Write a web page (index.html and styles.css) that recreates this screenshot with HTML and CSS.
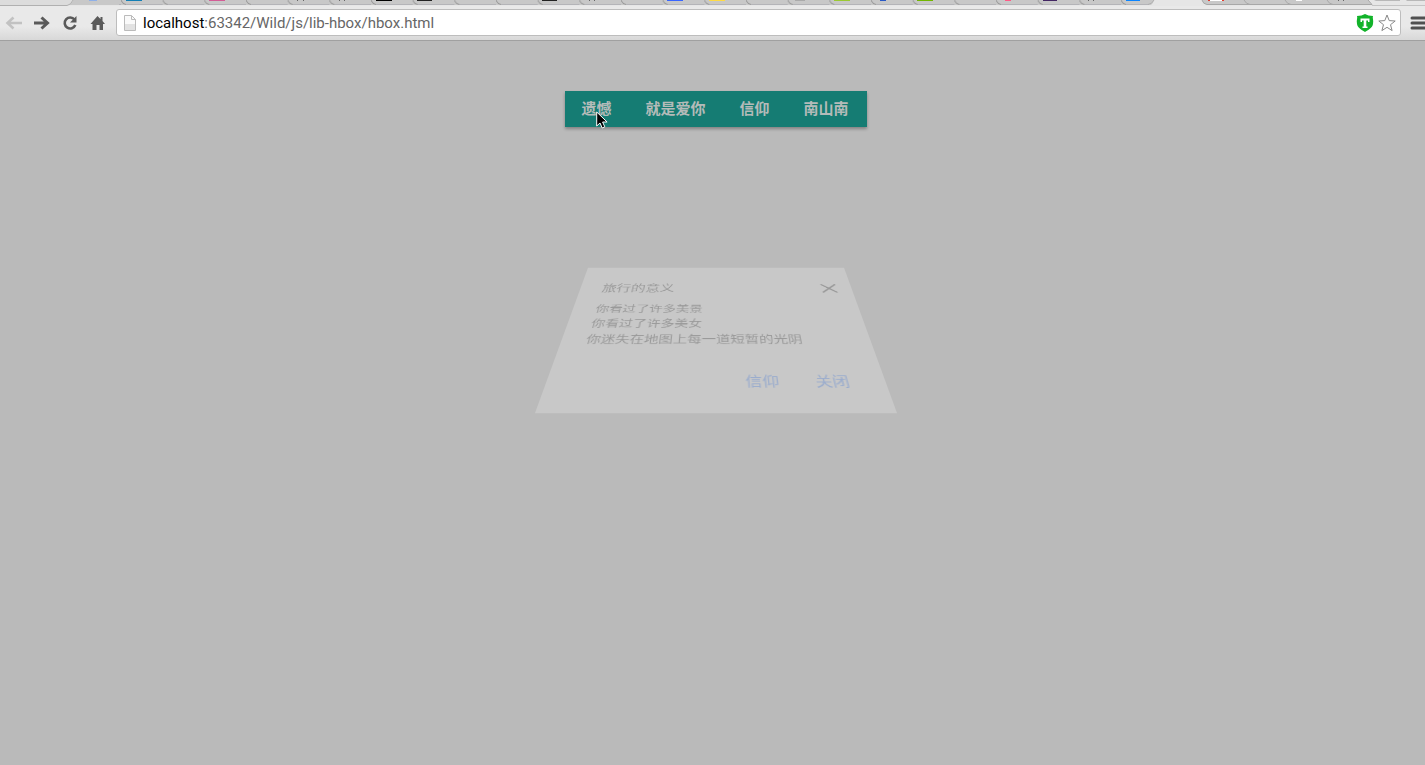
FILE: index.html
```html
<!DOCTYPE html>
<html lang="zh-CN">
<head>
<meta charset="utf-8">
<title>hbox</title>
<link rel="stylesheet" href="styles.css">
</head>
<body>
<div class="window">
  <svg class="tabs" width="1433" height="6" viewBox="0 0 1433 6" aria-hidden="true">
    <defs>
      <pattern id="tab" x="121" width="41.67" height="6" patternUnits="userSpaceOnUse">
        <path d="M0 0Q1.500 4 5 4.500" fill="none" stroke="#999"/><path d="M5 4.500H41.670" stroke="#b4b4b8"/>
      </pattern>
    </defs>
    <rect width="1433" height="6" fill="#e6e6e6"/>
    <rect width="72" height="5" fill="#dcdcdc"/>
    <path d="M73 0Q72 4 69 5H1151Q1153 4 1154 0Z" fill="#c8c8c8"/>
    <rect x="119" width="1030" height="6" fill="url(#tab)"/>
    <path d="M0 5.500H67Q71 5 73 0M1148 4.500Q1152 4 1154 0" fill="none" stroke="#b0b0b0"/>
    <path d="M1202 0Q1203 4 1207 5H1372L1368 0Z" fill="#c8c8c8"/>
    <path d="M1202 0Q1203 4 1207 4.500H1372L1368 0M1244 0Q1246 4 1250 4.500M1285 0Q1287 4 1291 4.500M1327 0Q1329 4 1333 4.500" fill="none" stroke="#a8a8a8"/>
    <path d="M1374 0H1400V1H1376ZM1406 0H1433V1H1407Z" fill="#b8b8b8"/><path d="M1372 5.500H1433" stroke="#c4c4c4"/>
    <path d="M89 0h8v1h-8z" fill="#8fb0e8"/><path d="M126 0h16v1h-16z" fill="#137fb5"/>
    <path d="M209 0h16v1h-16z" fill="#d35d96"/><path d="M376 0h16v1h-16z" fill="#000"/>
    <path d="M417 0h15v1h-15zM542 0h15v1h-15z" fill="#222"/><path d="M667 0h16v1h-16z" fill="#3865ff"/>
    <path d="M297 0h1v1h-1zM303 0h1v1h-1zM339 0h1v1h-1zM344 0h1v1h-1zM589 0h1v1h-1zM594 0h1v1h-1zM1088 0h1v1h-1zM1093 0h1v1h-1zM1338 0h1v1h-1zM1343 0h1v1h-1z" fill="#666"/>
    <path d="M709 0h16v1h-16z" fill="#ffdb45"/><path d="M795 0h10v1h-10z" fill="#aaa"/>
    <path d="M834 0h16v1h-16z" fill="#9bc932"/><path d="M880 0h6v1h-6z" fill="#2858c5"/>
    <path d="M917 0h16v1h-16z" fill="#72b600"/><path d="M1005 0h6v1h-6z" fill="#ff5a86"/>
    <path d="M1043 0h14v1h-14z" fill="#432663"/><path d="M1126 0h14v1h-14z" fill="#0a84ff"/>
    <path d="M1208 0h2v1h-2zM1222 0h2v1h-2z" fill="#e43a2c"/><path d="M1210 0h12v1h-12zM1296 0h6v1h-6z" fill="#fff"/>
  </svg>
  <header class="toolbar">
    <div class="tools">
      <button class="tool" aria-label="Back"><svg width="18" height="18" viewBox="0 0 18 18"><path d="M17 9H3M8.500 3.500L2.500 9l6 5.500" fill="none" stroke="#c2c2c2" stroke-width="2.600"/></svg></button>
      <button class="tool" aria-label="Forward"><svg width="18" height="18" viewBox="0 0 18 18"><path d="M1 9h14M8.500 3.500l6 5.500-6 5.500" fill="none" stroke="#5a5a5a" stroke-width="3"/></svg></button>
      <button class="tool" aria-label="Reload"><svg width="18" height="18" viewBox="0 0 18 18"><path d="M13.500 5.500A5.500 5.500 0 1 0 14.300 11" fill="none" stroke="#5a5a5a" stroke-width="2.600"/><path d="M15.500 2v6.500H9z" fill="#5a5a5a"/></svg></button>
      <button class="tool" aria-label="Home"><svg width="18" height="18" viewBox="0 0 18 18"><path d="M8.500 2l3 3V3h2v4l2.500 3h-2v6h-3.500v-5h-3v5H3.500v-6H1.500z" fill="#5a5a5a"/></svg></button>
    </div>
    <div class="address">
      <svg width="12" height="16" viewBox="0 0 12 16" aria-hidden="true"><path d="M.5.5h7l4 4v11H.5z" fill="#fafafa" stroke="#bbb"/><path d="M1 9h10v6H1z" fill="#e2e2e2"/><path d="M7.500.5v4h4" fill="none" stroke="#bbb"/></svg>
      <a class="url" href="#"><span class="host">localhost</span>:63342/Wild/js/lib-hbox/hbox.html</a>
      <button class="tool" aria-label="Extension"><svg width="18" height="18" viewBox="0 0 18 18"><path d="M9 0q3 2 8 2c-.8 2 .8 4 0 8-.6 4-5 6-8 8-3-2-7.400-4-8-8-.8-4 .8-6 0-8q5 0 8-2z" fill="#12b32a"/><path d="M4.500 4.500h9V8H12V6.500h-1.700v6h1.200V14h-5v-1.500h1.200v-6H6V8H4.500z" fill="#fff"/></svg></button>
      <button class="tool star" aria-label="Bookmark"><svg width="18" height="18" viewBox="0 0 18 18"><path d="M9 1l2.200 5.600 6 .4-4.700 3.700 1.600 5.900L9 13.300l-5.100 3.300 1.600-5.900L.8 7l6-.4z" fill="#fff" stroke="#888"/></svg></button>
    </div>
    <button class="tool menu" aria-label="Menu"><svg width="18" height="18" viewBox="0 0 18 18"><path d="M2 4h15M2 9h15M2 14h15" stroke="#505050" stroke-width="3" stroke-linecap="round"/></svg></button>
  </header>
  <main class="page">
    <nav class="nav">
      <button class="nav-item">遗憾</button><button class="nav-item">就是爱你</button><button class="nav-item">信仰</button><button class="nav-item">南山南</button>
      <svg class="cursor" width="12" height="18" viewBox="0 0 12 18" aria-hidden="true"><path d="M.7 1v14l3.300-3 2.200 5 2.600-1.200-2.200-4.800h4.500z" fill="#000" stroke="#fff"/></svg>
    </nav>
    <section class="dialog" role="dialog" aria-labelledby="dialog-title">
      <div class="dialog-head">
        <h1 class="dialog-title" id="dialog-title">旅行的意义</h1>
        <button class="close" aria-label="关闭"><svg width="18" height="18" viewBox="0 0 18 18"><path d="M1 2l16 14M17 2L1 16" stroke="#999" stroke-width="2"/></svg></button>
      </div>
      <p class="dialog-text">你看过了许多美景<br>你看过了许多美女<br>你迷失在地图上每一道短暂的光阴</p>
      <div class="dialog-actions">
        <button class="action">信仰</button>
        <button class="action">关闭</button>
      </div>
    </section>
  </main>
</div>
</body>
</html>
```
FILE: styles.css
```css
* { box-sizing: border-box; }
html, body { margin: 0; height: 100%; }
body {
  overflow: hidden;
  background: #bababa;
  font-family: "Liberation Sans", "Noto Sans CJK SC", sans-serif;
}
button { border: 0; padding: 0; background: none; font: inherit; color: inherit; cursor: pointer; }
svg { display: block; flex: none; }

/* The window runs slightly past the right edge of the screen. */
.window { display: flex; flex-direction: column; width: calc(100% + 7px); min-height: 100%; }
.toolbar {
  display: flex;
  align-items: center;
  gap: 9px;
  height: 35px;
  padding: 0 4px 1px 5px;
  background: linear-gradient(#e9e9e9 60%, #d8d8d8);
  border-bottom: 1px solid #a0a0a0;
}
.tools { display: flex; gap: 10px; width: 102px; }
.tool { display: flex; flex: none; }
.address {
  display: flex;
  align-items: center;
  flex: 1;
  height: 27px;
  padding: 0 4px 0 7px;
  background: #fff;
  border: 1px solid #bdbdbd;
  border-radius: 3px;
}
.url {
  flex: 1;
  margin-left: 7px;
  font-family: Roboto, sans-serif;
  font-size: 15px;
  line-height: 20px;
  color: #666;
  text-decoration: none;
}
.host { color: #000; }
.star { margin-left: 4px; }

.page { display: flex; flex-direction: column; align-items: center; flex: 1; padding-top: 50px; }
.nav {
  position: relative;
  display: flex;
  background: #157c73;
  box-shadow: 0 2px 3px rgba(0, 0, 0, .3);
}
.nav-item { padding: 0 18px 0 16px; font-size: 15px; line-height: 36px; font-weight: 600; color: #b4bbb9; }
.cursor { position: absolute; left: 31px; top: 20px; }

/* Dialog caught part-way through its flip-in animation. */
.dialog {
  width: 300px;
  margin-top: 101px;
  padding: 26px 16px 17px;
  background: #c8c8c8;
  color: #999;
  transform: perspective(412px) rotateX(45deg);
}
.dialog-head { display: flex; justify-content: space-between; align-items: center; padding-left: 8px; }
.dialog-title { margin: 0; font-size: 16px; line-height: 24px; font-weight: 400; }
.dialog-text { margin: 10px 0 25px; padding-left: 8px; font-size: 14px; line-height: 22px; }
.dialog-actions { display: flex; justify-content: flex-end; }
.action { padding: 0 16px; font-size: 15px; line-height: 32px; color: #9aaccd; }
```
